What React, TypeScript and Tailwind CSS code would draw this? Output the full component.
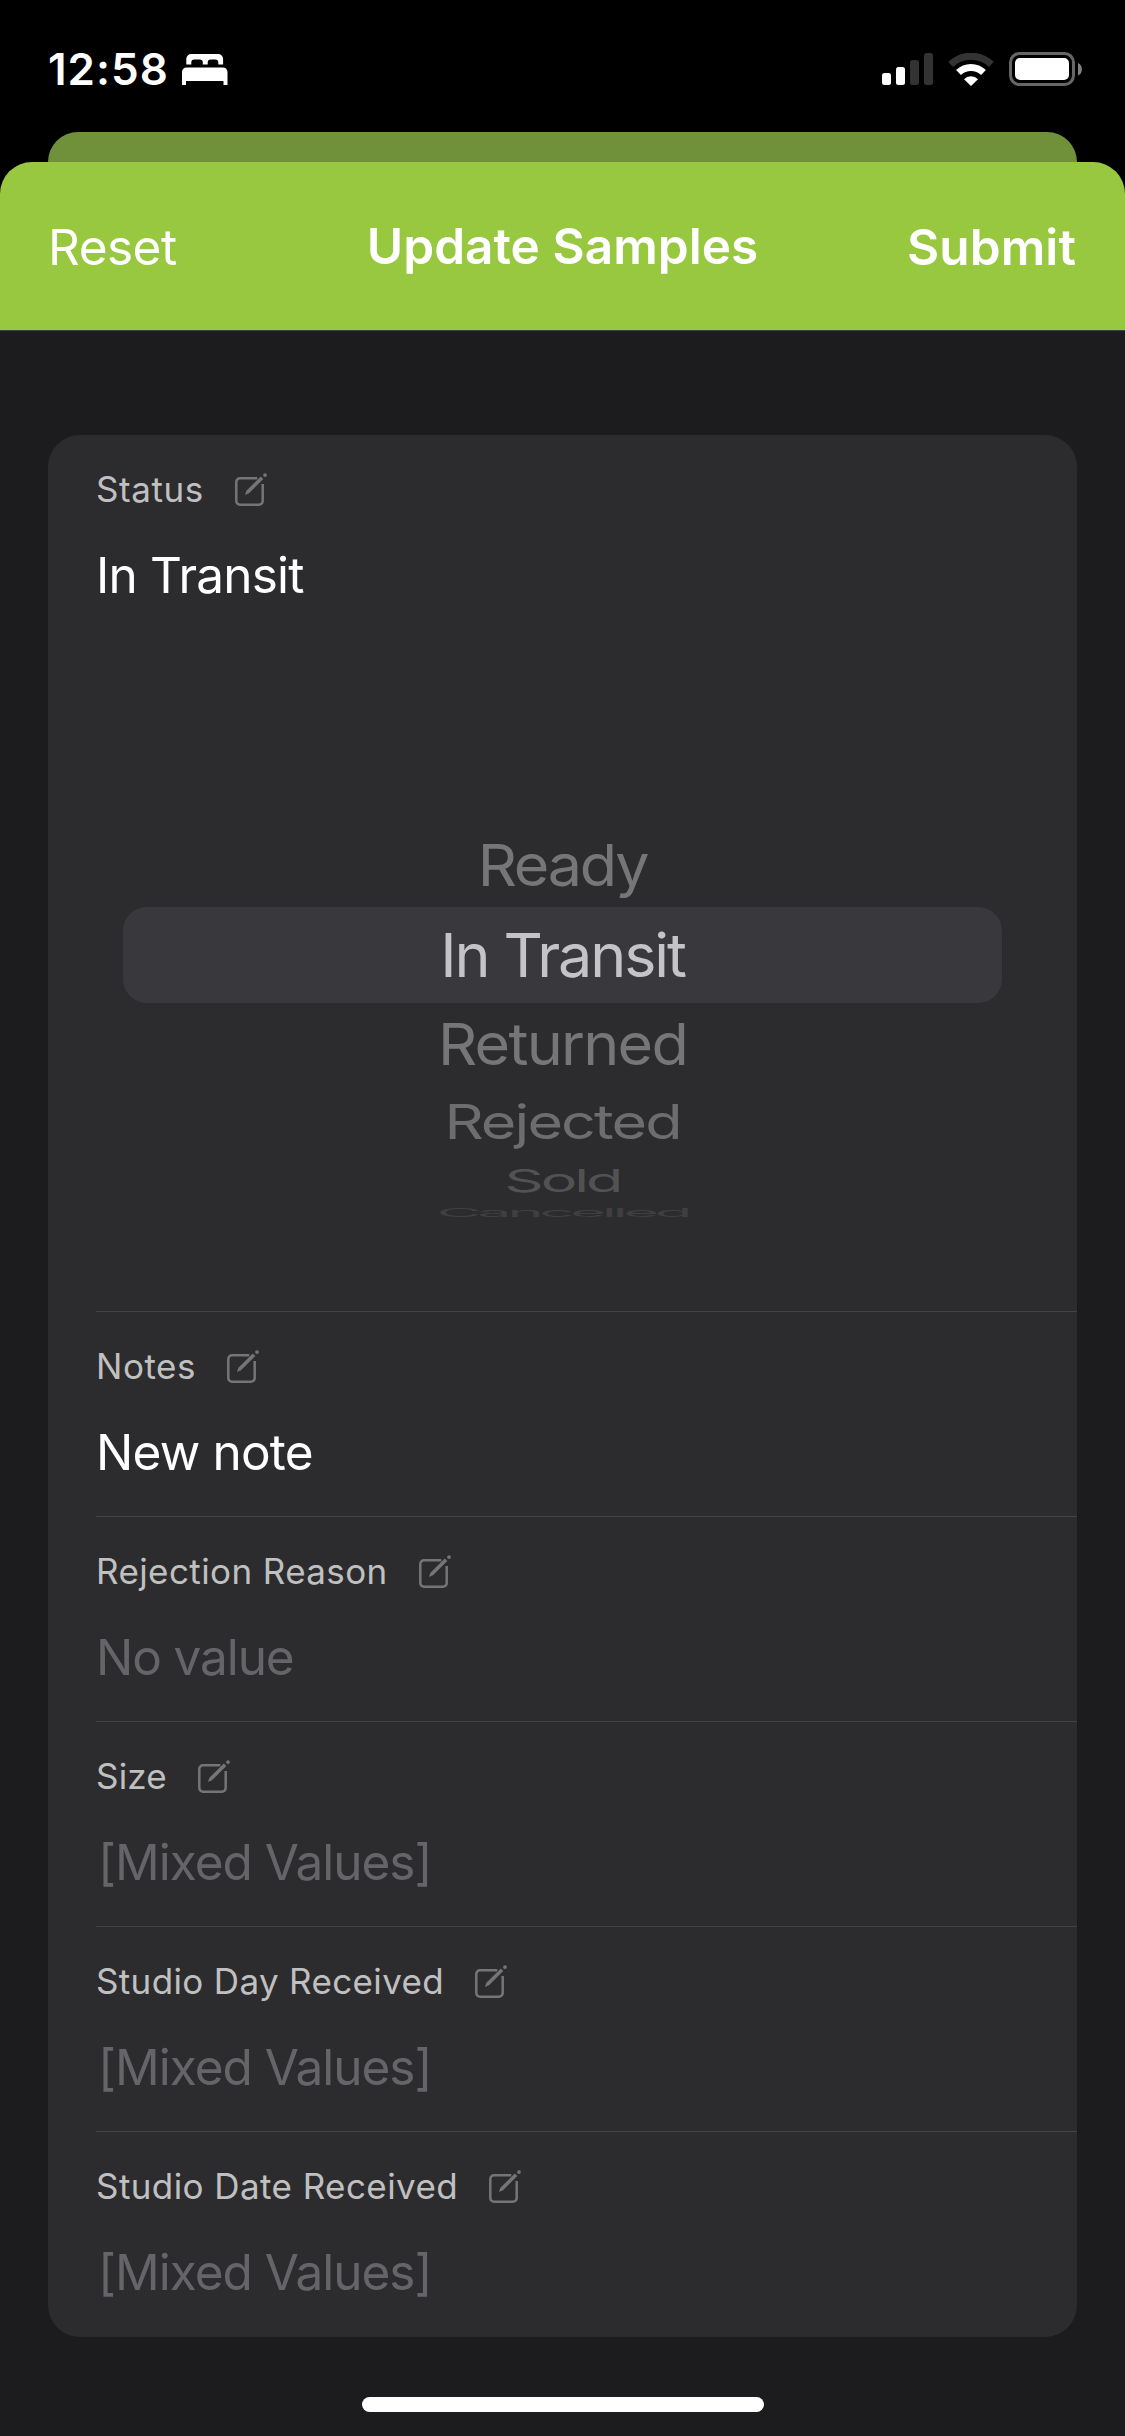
import { clsx } from "clsx";

type Field = {
  label: string;
  value: string;
  filled?: boolean;
  picker?: boolean;
  labelClass: string;
  valueClass: string;
};

const fields: Field[] = [
  { label: "Status", value: "In Transit", filled: true, picker: true, labelClass: "tracking-[0.55px]", valueClass: "tracking-[-0.8px]" },
  { label: "Notes", value: "New note", filled: true, labelClass: "tracking-[0.55px]", valueClass: "tracking-[-0.8px]" },
  { label: "Rejection Reason", value: "No value", labelClass: "tracking-[0.4px]", valueClass: "tracking-[-1.1px]" },
  { label: "Size", value: "[Mixed Values]", labelClass: "tracking-[0.2px]", valueClass: "pl-0.5 tracking-[-1px]" },
  { label: "Studio Day Received", value: "[Mixed Values]", labelClass: "tracking-[0.35px]", valueClass: "pl-0.5 tracking-[-1px]" },
  { label: "Studio Date Received", value: "[Mixed Values]", labelClass: "tracking-[0.42px]", valueClass: "pl-0.5 tracking-[-1px]" },
];

// Each row tilts further away from the selected one, like a wheel
const wheel = [
  { name: "Ready", row: "h-[84px]", text: "scale-y-[0.95] tracking-[-2.2px] text-[#767677]" },
  { name: "In Transit", row: "h-24 rounded-3xl bg-[#39383d]", text: "tracking-[-2.1px] text-[#c4c4c6]" },
  { name: "Returned", row: "h-[82px]", text: "scale-y-[0.95] tracking-[-1.7px] text-[#767677]" },
  { name: "Rejected", row: "h-[75px]", text: "scale-y-[0.78] tracking-[-1.9px] text-[#6d6d6e]" },
  { name: "Sold", row: "h-[41px]", text: "scale-y-[0.52] tracking-[-3px] text-[#525253]" },
  { name: "Cancelled", row: "h-[23px]", text: "scale-y-[0.2] tracking-[-4px] text-[#3f3f40]" },
];

function BedIcon() {
  return (
    <svg viewBox="0 0 46 32" className="h-8 w-[46px]" fill="#fff" aria-hidden="true">
      <path d="M4.300 10.500V5a5 5 0 0 1 5-5h26.800a5 5 0 0 1 5 5v5.500h-4.800V8.500a3 3 0 0 0-3-3h-4.600a3 3 0 0 0-3 3v2h-4.900v-2a3 3 0 0 0-3-3h-5.500a3 3 0 0 0-3 3v2z" />
      <path d="M0 31V18a4.500 4.500 0 0 1 4.500-4.500h36.500a4.500 4.500 0 0 1 4.500 4.500v13h-4v-4H4v4z" />
    </svg>
  );
}

function SignalIcon() {
  return (
    <svg viewBox="0 0 51 32" className="h-8 w-[51px]" aria-hidden="true">
      <rect x="0" y="20" width="9" height="12" rx="2.500" fill="#fff" />
      <rect x="14" y="14" width="9" height="18" rx="2.500" fill="#fff" />
      <rect x="28" y="7" width="9" height="25" rx="2.500" fill="#333" />
      <rect x="42" y="0" width="9" height="32" rx="2.500" fill="#333" />
    </svg>
  );
}

function WifiIcon() {
  return (
    <svg viewBox="0 0 46 33" className="h-[33px] w-[46px]" fill="none" aria-hidden="true">
      <path d="M2.600 11.400a29.500 29.500 0 0 1 40.800 0" stroke="#333" strokeWidth="7" />
      <path d="M10.500 19.600a18 18 0 0 1 25 0" stroke="#fff" strokeWidth="7" />
      <path d="M16 26.200a10 10 0 0 1 14 0L23 33z" fill="#fff" />
    </svg>
  );
}

function BatteryIcon() {
  return (
    <svg viewBox="0 0 73 34" className="h-[34px] w-[73px]" aria-hidden="true">
      <rect x="1.500" y="1.500" width="63" height="31" rx="9" fill="none" stroke="#666" strokeWidth="3" />
      <rect x="6" y="6" width="54" height="22" rx="5" fill="#fff" />
      <path d="M69 11c5.200 1.500 5.200 11 0 12.500z" fill="#808080" />
    </svg>
  );
}

function EditIcon() {
  return (
    <svg viewBox="0 0 34 34" className="h-[34px] w-[34px]" fill="none" stroke="#757576" strokeWidth="2.500" aria-hidden="true">
      <path d="M23.300 6.300H6A3.700 3.700 0 0 0 2.300 10v19A3.700 3.700 0 0 0 6 32.700h19a3.700 3.700 0 0 0 3.700-3.700V12" />
      <path d="M10.900 22.900l1.500-4.200L26.800 4.600l2.500 2.500L15 21.300z" fill="#757576" stroke="none" />
      <circle cx="31" cy="3.100" r="1.900" fill="#757576" stroke="none" />
    </svg>
  );
}

function StatusBar() {
  return (
    <div className="flex h-[132px] items-start justify-between pr-[43px] pl-12">
      <div className="flex pt-[42px]">
        <span className="w-[134px] text-[44px] leading-[54px] font-semibold tracking-[1px]">12:58</span>
        <div className="pt-3">
          <BedIcon />
        </div>
      </div>
      <div className="flex items-center gap-[15px] pt-[52px]">
        <SignalIcon />
        <WifiIcon />
        <BatteryIcon />
      </div>
    </div>
  );
}

function SheetHeader() {
  return (
    <header className="grid h-[169px] grid-cols-[1fr_auto_1fr] items-start rounded-t-[32px] border-b border-[#3f4044] bg-[#97c83f] px-12 pt-[52px] text-[49.5px] leading-[64px]">
      <button className="justify-self-start pt-px tracking-[-0.5px]">Reset</button>
      <h1 className="font-semibold tracking-[0.05px]">Update Samples</h1>
      <button className="justify-self-end pt-px pr-px font-semibold tracking-[0.1px]">Submit</button>
    </header>
  );
}

function StatusPicker() {
  return (
    <div className="mt-[216px] mr-[75px] mb-[55px] ml-[27px]">
      {wheel.map(({ name, row, text }) => (
        <div key={name} className={clsx("flex items-center justify-center", row)}>
          <span className={clsx("text-[61px] leading-none whitespace-nowrap", text)}>{name}</span>
        </div>
      ))}
    </div>
  );
}

function FieldRow({ field, last }: { field: Field; last: boolean }) {
  return (
    <section className={clsx("pt-[30px]", last ? "pb-[33px]" : "border-b border-[#434345] pb-8")}>
      <div className="flex h-12 items-center gap-[30px]">
        <span className={clsx("text-[35px] leading-[48px] text-[#c0c0c0]", field.labelClass)}>{field.label}</span>
        <EditIcon />
      </div>
      <p
        className={clsx(
          "mt-[30px] text-[49.5px] leading-[64px]",
          field.filled ? "text-white" : "text-[#656569]",
          field.valueClass,
        )}
      >
        {field.value}
      </p>
      {field.picker && <StatusPicker />}
    </section>
  );
}

export default function App() {
  return (
    <div className="flex h-[2436px] w-[1125px] flex-col overflow-hidden bg-black font-['Inter','Liberation_Sans',sans-serif] text-white">
      <StatusBar />
      <div className="mx-12 h-[30px] rounded-t-[30px] bg-[#70903a]" />
      <SheetHeader />
      <main className="flex flex-1 flex-col items-center bg-[#1c1c1e] pt-[104px]">
        <div className="w-[1029px] rounded-[32px] bg-[#2c2c2e] pl-12">
          {fields.map((field, i) => (
            <FieldRow key={field.label} field={field} last={i === fields.length - 1} />
          ))}
        </div>
        <div className="mt-[60px] h-[15px] w-[402px] rounded-full bg-white" />
      </main>
    </div>
  );
}
